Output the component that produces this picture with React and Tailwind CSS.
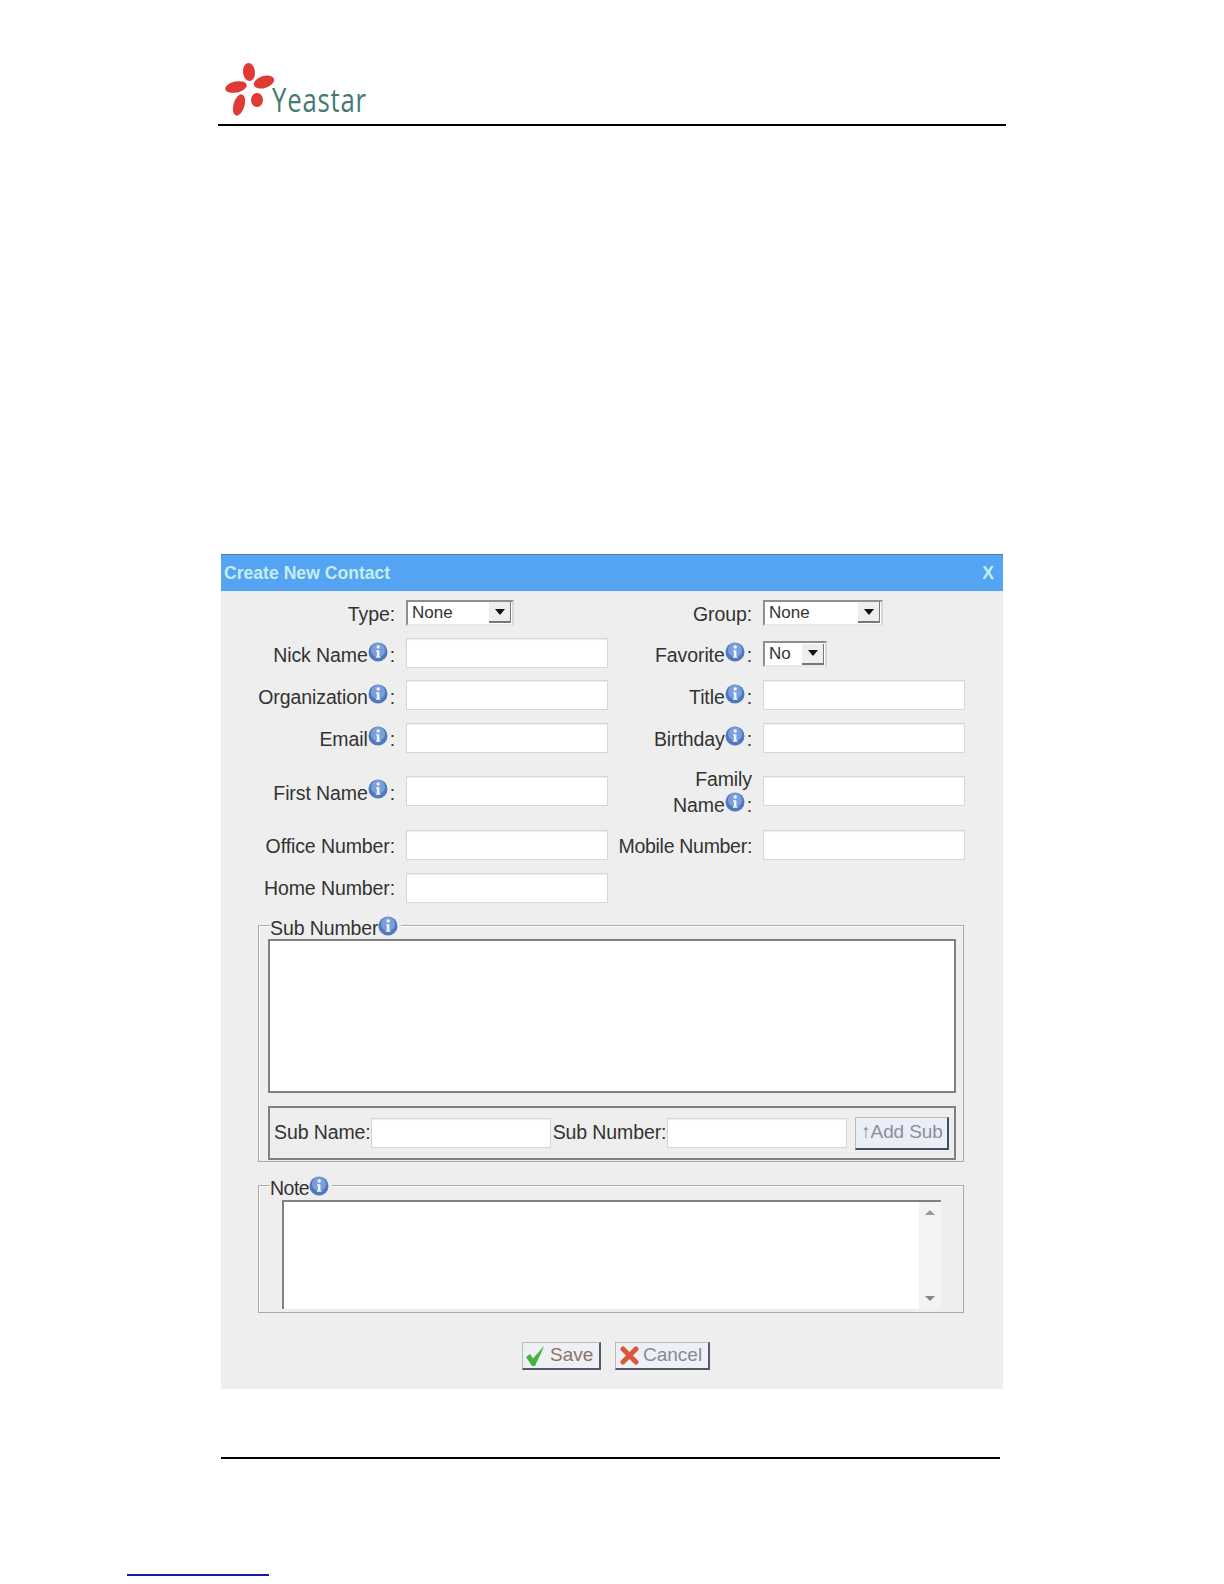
const InfoIcon = () => (
  <svg className="w-[20px] h-[20px] shrink-0 -mt-[5px]" viewBox="0 0 20 20">
    <circle cx="10" cy="10" r="9.5" fill="#4f78bd" />
    <circle cx="10" cy="8" r="7" fill="#7c9fdc" />
    <circle cx="10.2" cy="5" r="1.7" fill="#eef6ff" />
    <path d="M8 8.2h3.4v6.2h1.1v1.4H7.8v-1.4h1.1V9.6H8z" fill="#eef6ff" />
  </svg>
)

const Label = ({ text, info, className = 'tracking-[-0.1px]' }) => (
  <div className={`flex items-center justify-end whitespace-nowrap text-[19.5px] text-[#333] ${className}`}>
    <span className="translate-y-[2px]">{text}</span>
    {info && <InfoIcon />}
    <span className={`translate-y-[2px] ${info ? 'ml-[2px]' : ''}`}>:</span>
  </div>
)

const TextBox = ({ className = 'w-[202px]' }) => (
  <input className={`${className} h-[30px] bg-white border border-[#d6d6d6] shadow-[inset_0_1px_1px_#eee] outline-none`} />
)

const SelectBox = ({ value, className }) => (
  <div className={`${className} h-[26px] flex items-center justify-between bg-white border-2 border-[#8f8f8f] border-r-[#d8d8d8] border-b-[#e8e8e8] pl-[4px] pr-[1px] text-[17px] text-[#333]`}>
    <span>{value}</span>
    <div className="w-[22px] h-[21px] flex items-center justify-center bg-[#eeeeee] border-r border-b-2 border-[#777]">
      <svg className="w-[10px] h-[6px]" viewBox="0 0 10 6">
        <path d="M0 0h10L5 6z" fill="#111" />
      </svg>
    </div>
  </div>
)

const Fieldset = ({ legend, legendClass = 'tracking-[-0.1px]', className, children }) => (
  <div className={`relative ml-[37px] mr-[39px] border border-[#aaaaaa] shadow-[inset_1px_1px_0_#fff] ${className}`}>
    <div className={`absolute -top-[9px] left-[11px] h-[22px] flex items-center bg-[#eeeeee] pr-[3px] text-[19.5px] leading-[22px] text-[#333] ${legendClass}`}>
      <span>{legend}</span>
      <InfoIcon />
    </div>
    {children}
  </div>
)

const rows = [
  ['Type', false, <SelectBox value="None" className="w-[108px]" />, 'Group', false, <SelectBox value="None" className="w-[120px]" />],
  ['Nick Name', true, <TextBox className="w-[202px] -translate-y-[1px]" />, 'Favorite', true, <SelectBox value="No" className="w-[64px]" />],
  ['Organization', true, <TextBox className="w-[202px] -translate-y-[1px]" />, 'Title', true, <TextBox className="w-[202px] -translate-y-[1px]" />],
  ['Email', true, <TextBox />, 'Birthday', true, <TextBox />],
]

const App = () => {
  return (
    <div className="w-[1224px] h-[1584px] bg-white overflow-hidden font-['Liberation_Sans',Arial,sans-serif]">
      {/* page header */}
      <div className="h-[126px] ml-[218px] w-[788px] border-b-2 border-black flex items-end pb-[7px] pl-[5px]">
        <svg className="w-[52px] h-[56px] mb-[1px]" viewBox="0 0 52 56">
          <ellipse cx="26" cy="12" rx="6" ry="9" fill="#e03a35" transform="rotate(-6 26 12)" />
          <ellipse cx="41" cy="22" rx="10.500" ry="6" fill="#e03a35" transform="rotate(-18 41 22)" />
          <ellipse cx="13" cy="27" rx="11" ry="5.500" fill="#e03a35" transform="rotate(-12 13 27)" />
          <ellipse cx="16" cy="45" rx="5.500" ry="11" fill="#e03a35" transform="rotate(16 16 45)" />
          <ellipse cx="34" cy="40" rx="6" ry="7" fill="#e03a35" />
        </svg>
        <span className="text-[33px] leading-[38px] scale-x-[0.78] origin-left -ml-[3px] -mb-[2px] tracking-[1px] text-[#457a72] font-['Open_Sans',sans-serif]">Yeastar</span>
      </div>

      {/* dialog */}
      <div className="mt-[428px] ml-[221px] w-[782px] h-[835px] bg-[#eeeeee] flex flex-col">
        <div className="h-[37px] shrink-0 bg-[#55a3f3] border-t border-[#3f7fb8] flex items-center justify-between pl-[3px] pr-[9px] text-[17.600px] font-bold text-[#c4eff2]">
          <span>Create New Contact</span>
          <span>X</span>
        </div>

        <div className="pt-[1px] grid grid-cols-[174px_202px_133px_202px] grid-rows-[41px_42px_42px_42px_65px_42px_42px] gap-x-[11px] items-center">
          {rows.map((row, i) => (
            <div key={i} className="contents">
              <Label text={row[0]} info={row[1]} />
              {row[2]}
              <Label text={row[3]} info={row[4]} />
              {row[5]}
            </div>
          ))}

          <Label text="First Name" info />
          <TextBox className="w-[202px] -translate-y-[1px]" />
          <div className="text-right text-[19.5px] leading-[26px] tracking-[-0.1px] text-[#333]">
            <div>Family</div>
            <div className="flex items-center justify-end">
              <span>Name</span>
              <InfoIcon />
              <span className="ml-[2px]">:</span>
            </div>
          </div>
          <TextBox className="w-[202px] -translate-y-[1px]" />

          <Label text="Office Number" />
          <TextBox />
          <Label text="Mobile Number" className="tracking-[-0.3px]" />
          <TextBox />

          <Label text="Home Number" />
          <TextBox className="w-[202px] translate-y-[1px]" />
        </div>

        {/* sub numbers */}
        <Fieldset legend="Sub Number" className="mt-[17px] h-[237px] pl-[9px] pr-[7px] pt-[13px]">
          <div className="h-[154px] bg-white border-2 border-[#808080]" />
          <div className="mt-[13px] h-[54px] flex items-center border-2 border-[#808080] pl-[4px] text-[19.5px] tracking-[-0.1px] text-[#333]">
            <span>Sub Name:</span>
            <TextBox className="w-[180px]" />
            <span className="ml-[2px]">Sub Number:</span>
            <TextBox className="w-[180px] ml-[1px]" />
            <button className="ml-[8px] w-[94px] h-[33px] bg-[#eaeef6] border border-[#bbb] border-r-2 border-b-2 border-r-[#444c60] border-b-[#444c60] text-[19px] text-[#8a8f9c]">↑Add Sub</button>
          </div>
        </Fieldset>

        {/* note */}
        <Fieldset legend="Note" legendClass="tracking-[-0.5px]" className="mt-[23px] h-[128px] pl-[23px] pr-[22px] pt-[14px]">
          <div className="h-[109px] flex justify-between bg-white border-2 border-[#808080] border-r-0 border-b-0">
            <div />
            <div className="w-[22px] h-full bg-[#f3f3f3] flex flex-col items-center justify-between py-[8px]">
              <svg className="w-[10px] h-[5px]" viewBox="0 0 10 5"><path d="M5 0l5 5H0z" fill="#999" /></svg>
              <svg className="w-[10px] h-[5px]" viewBox="0 0 10 5"><path d="M0 0h10L5 5z" fill="#888" /></svg>
            </div>
          </div>
        </Fieldset>

        {/* actions */}
        <div className="mt-[29px] flex pl-[301px] gap-[14px] text-[19px]">
          <button className="w-[79px] h-[28px] flex items-center pl-[3px] gap-[4px] bg-[#eef0f6] border border-[#bbb] border-r-2 border-b-2 border-r-[#555a6b] border-b-[#555a6b] text-[#8a7565]">
            <svg className="w-[20px] h-[20px]" viewBox="0 0 20 20">
              <path d="M0 11l4-3 3 4.500L18 0c-2 6-6 13-9 20H6z" fill="#45b53f" />
            </svg>
            <span>Save</span>
          </button>
          <button className="w-[95px] h-[28px] flex items-center pl-[4px] gap-[4px] bg-[#eef0f6] border border-[#bbb] border-r-2 border-b-2 border-r-[#555a6b] border-b-[#555a6b] text-[#858a98]">
            <svg className="w-[19px] h-[19px]" viewBox="0 0 19 19">
              <path d="M3 3l13 13M16 3L3 16" stroke="#d9583a" strokeWidth="5" strokeLinecap="round" />
            </svg>
            <span>Cancel</span>
          </button>
        </div>
      </div>

      {/* page footer */}
      <div className="mt-[68px] ml-[221px] w-[779px] border-b-2 border-black" />
      <div className="mt-[115px] ml-[127px] w-[142px] border-b-2 border-[#1a1a9c]" />
    </div>
  )
}

export default App
